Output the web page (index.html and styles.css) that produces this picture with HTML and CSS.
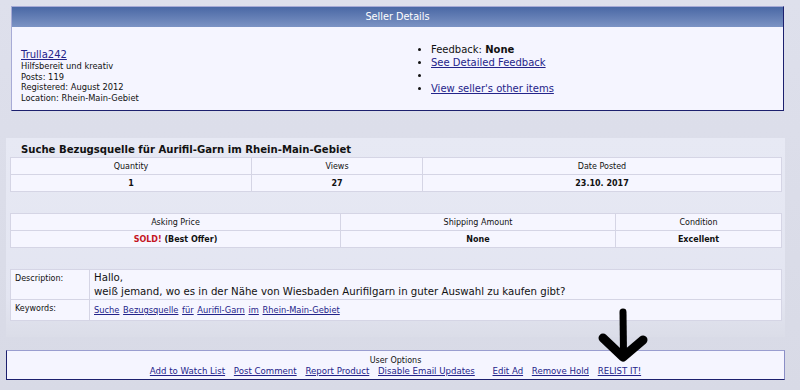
FILE: index.html
```html
<!DOCTYPE html>
<html lang="de">
<head>
    <meta charset="UTF-8">
    <meta name="viewport" content="width=device-width, initial-scale=1.0">
    <title>Suche Bezugsquelle für Aurifil-Garn im Rhein-Main-Gebiet</title>
    <link rel="stylesheet" href="styles.css">
</head>
<body>
    <div class="seller">
        <div class="seller-head">Seller Details</div>
        <div class="seller-body">
            <div class="seller-info">
                <a href="#" class="seller-name">Trulla242</a>
                <div>Hilfsbereit und kreativ</div>
                <div>Posts: 119</div>
                <div>Registered: August 2012</div>
                <div>Location: Rhein-Main-Gebiet</div>
            </div>
            <ul class="seller-links">
                <li>Feedback: <b>None</b></li>
                <li><a href="#">See Detailed Feedback</a></li>
                <li>&nbsp;</li>
                <li><a href="#">View seller's other items</a></li>
            </ul>
        </div>
    </div>

    <div class="panel">
        <div class="title">Suche Bezugsquelle für Aurifil-Garn im Rhein-Main-Gebiet</div>
        <table class="grid grid-light">
            <tr>
                <td class="c-qty">Quantity</td>
                <td class="c-views">Views</td>
                <td>Date Posted</td>
            </tr>
            <tr class="vals">
                <td>1</td>
                <td>27</td>
                <td>23.10. 2017</td>
            </tr>
        </table>

        <table class="grid grid-light">
            <tr>
                <td class="c-price">Asking Price</td>
                <td class="c-ship">Shipping Amount</td>
                <td>Condition</td>
            </tr>
            <tr class="vals">
                <td><span class="sold">SOLD!</span> (Best Offer)</td>
                <td>None</td>
                <td>Excellent</td>
            </tr>
        </table>

        <table class="grid details">
            <tr>
                <td class="label">Description:</td>
                <td class="desc">Hallo,<br>weiß jemand, wo es in der Nähe von Wiesbaden Aurifilgarn in guter Auswahl zu kaufen gibt?</td>
            </tr>
            <tr>
                <td class="label">Keywords:</td>
                <td class="keywords">
                    <a href="#">Suche</a> <a href="#">Bezugsquelle</a> <a href="#">für</a> <a href="#">Aurifil-Garn</a> <a href="#">im</a> <a href="#">Rhein-Main-Gebiet</a>
                </td>
            </tr>
        </table>
    </div>

    <div class="options">
        <div>User Options</div>
        <div class="option-links">
            <a href="#">Add to Watch List</a>
            <a href="#">Post Comment</a>
            <a href="#">Report Product</a>
            <a href="#">Disable Email Updates</a>
            <a href="#" class="gap">Edit Ad</a>
            <a href="#">Remove Hold</a>
            <a href="#">RELIST IT!</a>
        </div>
    </div>

    <!-- hand drawn arrow pointing at RELIST IT! -->
    <svg class="arrow" width="60" height="60" viewBox="0 0 60 60">
        <path d="M25 4 L25.5 46" stroke="#000" stroke-width="7" stroke-linecap="round" fill="none"/>
        <path d="M5 30 L25 49 L45 32" stroke="#000" stroke-width="9" stroke-linecap="round" stroke-linejoin="round" fill="none"/>
    </svg>
</body>
</html>
```

FILE: styles.css
```css
body {
    margin: 0;
    font-family: "DejaVu Sans", Verdana, sans-serif;
    font-size: 8px;
    color: #111;
    background: linear-gradient(to bottom, #dee0ec, #d8dae6);
    height: 390px;
    position: relative;
    overflow: hidden;
}
a {
    color: #24248a;
}
.seller {
    margin: 6px 16px 0 11px;
    border: 1px solid;
    border-color: #a7abd6 #1c206e #1c206e #a7abd6;
    background: #f5f5ff;
}
.seller-head {
    height: 20px;
    line-height: 20px;
    text-align: center;
    color: #fff;
    font-size: 9.7px;
    background: linear-gradient(to bottom, #4a68a5, #7c93c4);
}
.seller-body {
    display: flex;
    height: 83px;
}
.seller-info {
    width: 392px;
    padding: 22px 0 0 9px;
    font-size: 8.3px;
    line-height: 10.5px;
}
.seller-name {
    font-size: 10px;
    line-height: 12px;
    display: block;
}
.seller-links {
    margin: 0;
    padding: 16px 0 0 18px;
    font-size: 10px;
    line-height: 13px;
}
.panel {
    margin: 27px 15px 0 6px;
    padding: 5px 3px 16px 4px;
    background: linear-gradient(to bottom, #e7e9f4, #e3e5f1 80%, #dbdde8);
}
.title {
    font-weight: bold;
    font-size: 10.1px;
    line-height: 14px;
    padding-left: 11px;
}
.grid {
    width: 100%;
    border-collapse: collapse;
    background: #f6f6ff;
    border: 1px solid #2d3185;
    margin-bottom: 21px;
    table-layout: fixed;
}
.grid-light {
    border-bottom-color: #9094cc;
}
.grid td {
    border: 1px solid #d5d5e5;
    height: 16px;
    padding: 0;
    text-align: center;
}
.vals td {
    font-weight: bold;
}
.c-qty {
    width: 240px;
}
.c-views {
    width: 170px;
}
.c-price {
    width: 329px;
}
.c-ship {
    width: 274px;
}
.sold {
    color: #c4141e;
}
.details {
    margin-bottom: 0;
}
.details td {
    text-align: left;
    padding: 0 4px;
}
.details .label {
    width: 70px;
    vertical-align: top;
    padding-top: 4px;
}
.desc {
    font-size: 10.2px;
    line-height: 14px;
    height: 32px;
    padding-top: 1px !important;
}
.keywords {
    font-size: 8.3px;
}
.keywords a {
    margin-right: 1px;
}
.options {
    margin: 13px 15px 0 6px;
    border: 1px solid;
    border-color: #9a9ed0 #8a8ec6 #1c206e #1c206e;
    background: #f5f5ff;
    text-align: center;
    padding: 4px 0 2px;
    line-height: 11px;
}
.option-links {
    font-size: 8.6px;
}
.option-links a {
    margin: 0 3px;
}
.option-links .gap {
    margin-left: 12px;
}
.arrow {
    position: absolute;
    left: 598px;
    top: 308px;
}
```
